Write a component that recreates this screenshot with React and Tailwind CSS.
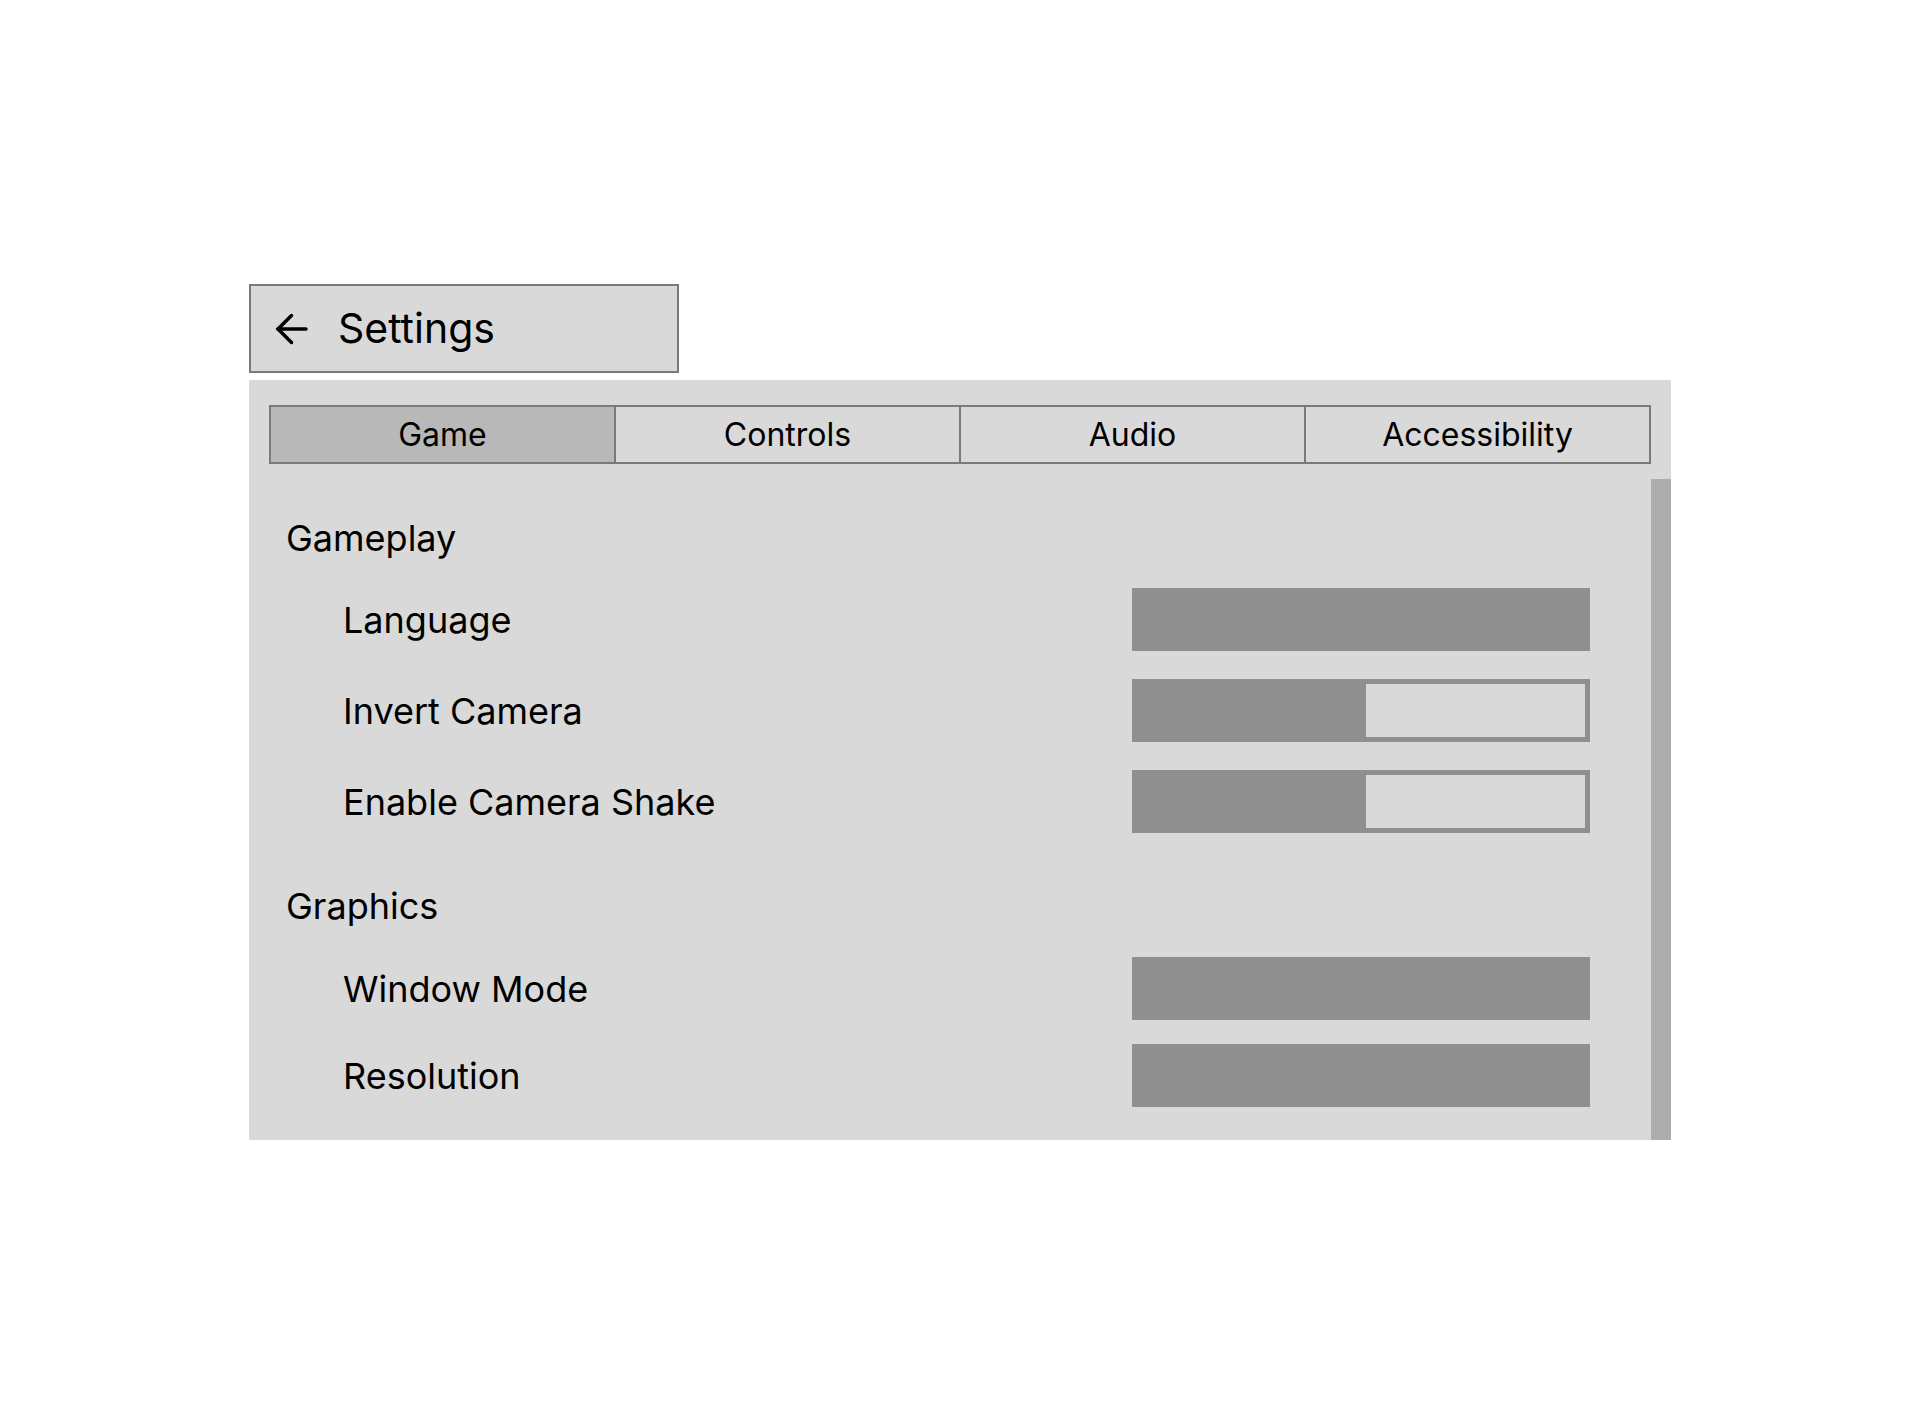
import React, { useState } from 'react';

// ─── Data ────────────────────────────────────────────────────────
const TABS = ['Game', 'Controls', 'Audio', 'Accessibility'];

const SECTIONS = [
  {
    title: 'Gameplay',
    gap: 'gap-7',
    titleGap: '',
    rows: [
      { label: 'Language', kind: 'select' },
      { label: 'Invert Camera', kind: 'toggle' },
      { label: 'Enable Camera Shake', kind: 'toggle' },
    ],
  },
  {
    title: 'Graphics',
    gap: 'gap-6',
    titleGap: 'mb-[5px]',
    rows: [
      { label: 'Window Mode', kind: 'select' },
      { label: 'Resolution', kind: 'select' },
    ],
  },
];

const font = { fontFamily: 'Inter, "Noto Sans", sans-serif' };

// ─── Back arrow ──────────────────────────────────────────────────
const BackArrow = () => (
  <svg width="34" height="32" viewBox="0 0 34 32" fill="none" className="shrink-0">
    <path d="M32 16H4" stroke="#000" strokeWidth="3.5" strokeLinecap="round" />
    <path d="M17.5 2.5L4 16L17.5 29.5" stroke="#000" strokeWidth="3.5" strokeLinecap="round" strokeLinejoin="miter" />
  </svg>
);

// ─── Controls ────────────────────────────────────────────────────
const SelectBar = () => <div className="w-[458px] h-[63px] bg-[#8f8f8f]" />;

const Toggle = () => (
  <div className="w-[458px] h-[63px] border-[5px] border-[#8f8f8f] bg-[#d9d9d9] flex">
    <div className="w-[229px] h-full bg-[#8f8f8f]" />
  </div>
);

const Row = ({ label, kind }) => (
  <div className="flex items-center justify-between h-[63px] pl-[94px] pr-[61px]">
    <span className="text-[36px] leading-[44px] text-black">{label}</span>
    {kind === 'toggle' ? <Toggle /> : <SelectBar />}
  </div>
);

const Section = ({ title, rows, gap, titleGap, className = '' }) => (
  <div className={`flex flex-col ${gap} ${className}`}>
    <div className={`pl-[37px] text-[36px] leading-[44px] text-black ${titleGap}`}>{title}</div>
    {rows.map(r => <Row key={r.label} {...r} />)}
  </div>
);

export default function App() {
  const [tab, setTab] = useState('Game');

  return (
    <div className="min-h-screen w-full bg-white" style={font}>
      <div className="pt-[284px] pl-[249px] w-[1671px]">
        {/* header */}
        <div className="w-[430px] h-[89px] border-2 border-[#7a7a7a] bg-[#d9d9d9] flex items-center pl-[23px] gap-[30px]">
          <BackArrow />
          <span className="text-[41px] leading-none text-black">Settings</span>
        </div>

        {/* panel */}
        <div className="mt-[7px] w-[1422px] bg-[#d9d9d9] flex flex-col pt-[25px]">
          <div className="px-[20px]">
            <div className="flex border-2 border-[#7a7a7a] h-[59px]">
              {TABS.map((t, i) => (
                <button
                  key={t}
                  onClick={() => setTab(t)}
                  className={`flex-1 flex items-center justify-center text-[32px] text-black ${i > 0 ? 'border-l-2 border-[#7a7a7a]' : ''} ${tab === t ? 'bg-[#b8b8b8]' : 'bg-[#d9d9d9]'}`}
                >
                  {t}
                </button>
              ))}
            </div>
          </div>

          <div className="mt-[15px] flex">
            <div className="flex-1 pt-[37px] pb-[33px]">
              <Section {...SECTIONS[0]} />
              <Section {...SECTIONS[1]} className="mt-[51px]" />
            </div>
            <div className="w-[20px] bg-[#adadad]" />
          </div>
        </div>
      </div>
    </div>
  );
}
